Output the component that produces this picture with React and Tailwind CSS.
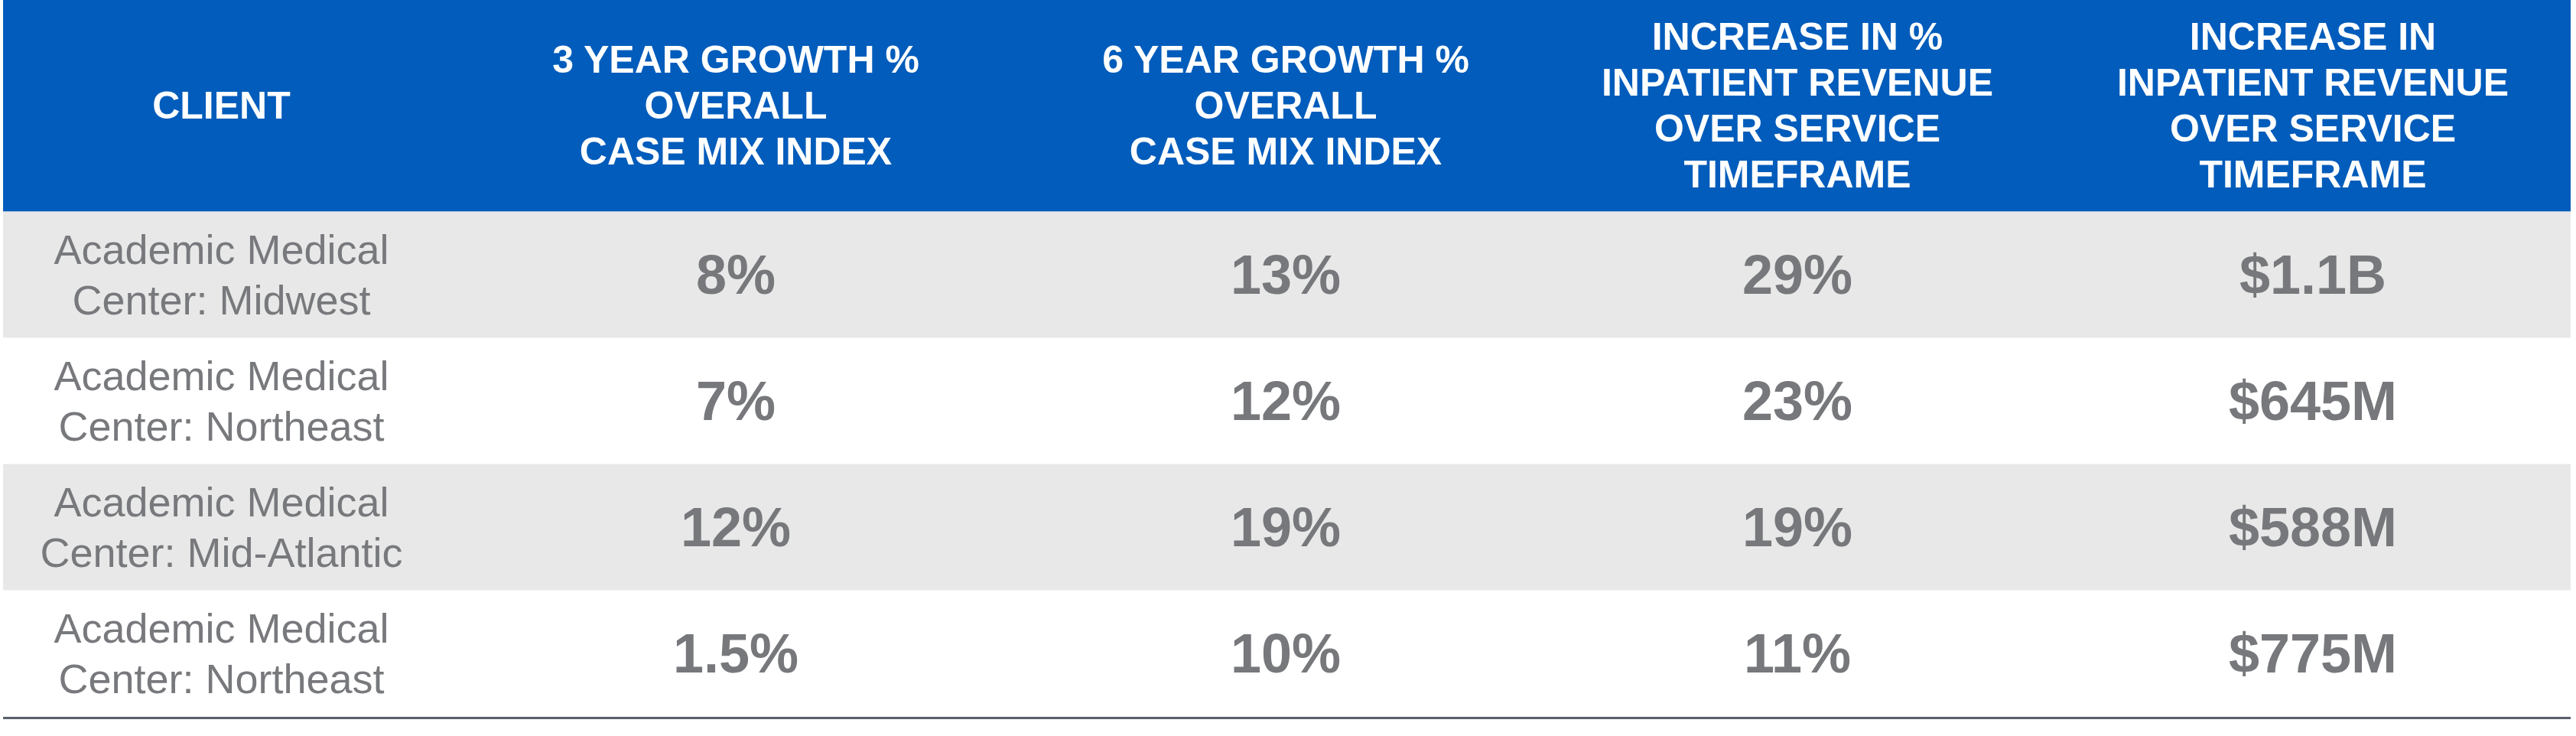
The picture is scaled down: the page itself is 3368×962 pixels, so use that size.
import React from "react";

const headers = [
  ["CLIENT"],
  ["3 YEAR GROWTH %", "OVERALL", "CASE MIX INDEX"],
  ["6 YEAR GROWTH %", "OVERALL", "CASE MIX INDEX"],
  ["INCREASE IN %", "INPATIENT REVENUE", "OVER SERVICE", "TIMEFRAME"],
  ["INCREASE IN", "INPATIENT REVENUE", "OVER SERVICE", "TIMEFRAME"],
];

const rows = [
  { region: "Midwest", values: ["8%", "13%", "29%", "$1.1B"] },
  { region: "Northeast", values: ["7%", "12%", "23%", "$645M"] },
  { region: "Mid-Atlantic", values: ["12%", "19%", "19%", "$588M"] },
  { region: "Northeast", values: ["1.5%", "10%", "11%", "$775M"] },
];

const cols = "grid grid-cols-[571px_774px_664px_674px_674px]";

export default function App() {
  return (
    <div className="w-[3368px] h-[962px] bg-white pl-[4px] font-['Liberation_Sans',Arial,sans-serif]">
      <div className="w-[3357px]">
        {/* header */}
        <div className={`${cols} h-[277px] bg-[#015cbb] border-b border-[#a9c3e3]`}>
          {headers.map((lines, i) => (
            <div
              key={i}
              className="flex flex-col items-center justify-center text-center text-white font-bold text-[50px] leading-[60px] pb-[1px]"
            >
              {lines.map((l) => (
                <span key={l}>{l}</span>
              ))}
            </div>
          ))}
        </div>

        {/* body */}
        {rows.map((r, idx) => (
          <div
            key={idx}
            className={`${cols} h-[165px] border-b border-[#f4f4f4] ${idx % 2 === 0 ? "bg-[#e8e8e8]" : "bg-white"}`}
          >
            <div className="flex flex-col items-center justify-center text-center text-[#77797c] text-[54px] leading-[66px]">
              <span>Academic Medical</span>
              <span>Center: {r.region}</span>
            </div>
            {r.values.map((v, j) => (
              <div
                key={j}
                className="flex items-center justify-center text-[#76787b] font-bold text-[72px] leading-none"
              >
                {v}
              </div>
            ))}
          </div>
        ))}
        <div className="h-[3px] bg-[#5a5f6c]" />
      </div>
    </div>
  );
}
